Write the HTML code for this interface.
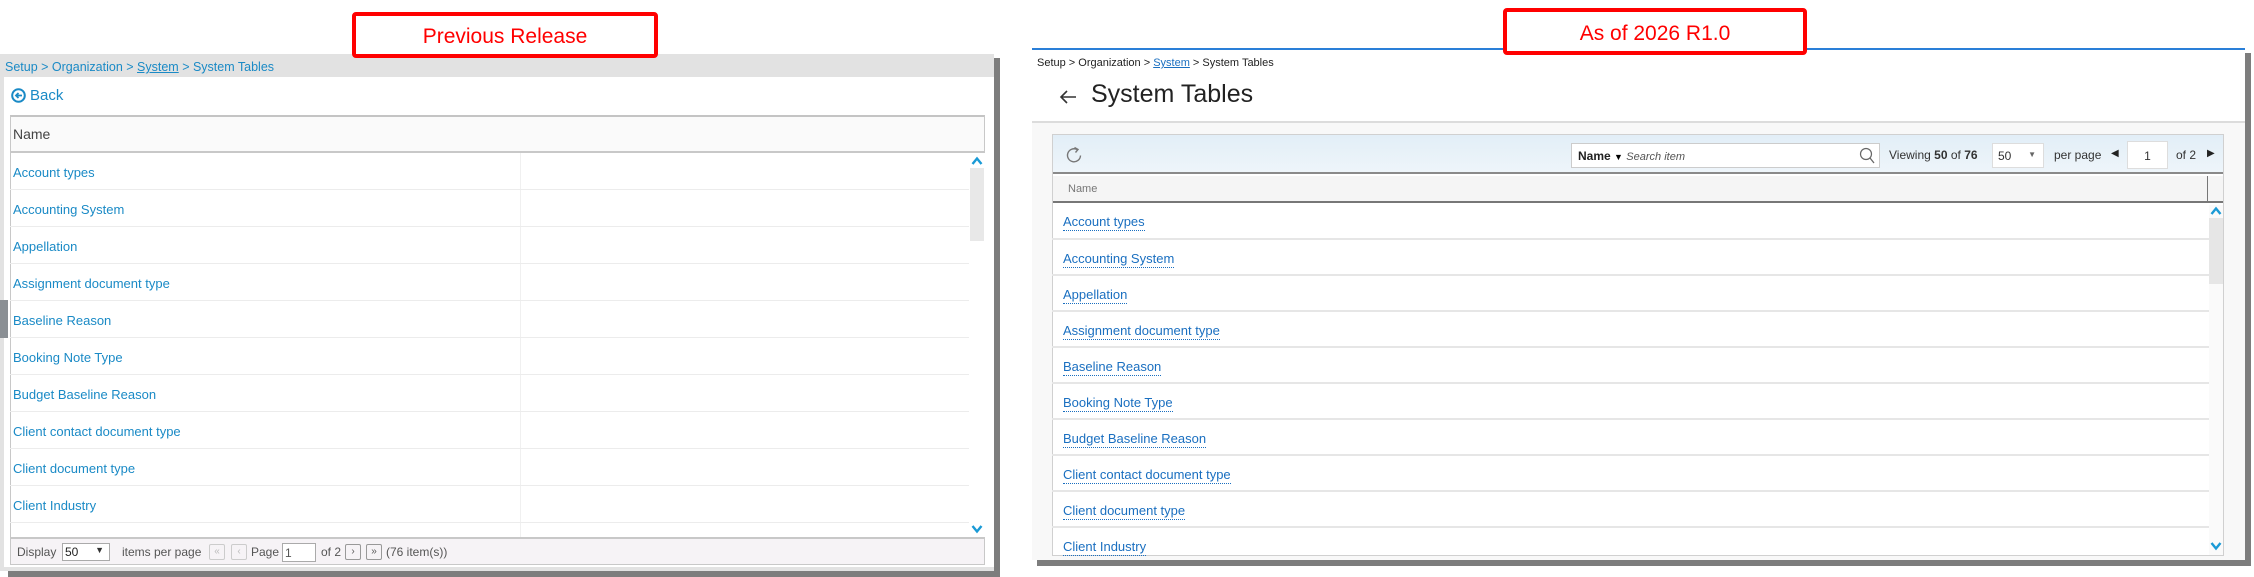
<!DOCTYPE html>
<html><head><meta charset="utf-8">
<style>
*{margin:0;padding:0;box-sizing:border-box}
body{width:2254px;height:577px;background:#fff;position:relative;overflow:hidden;font-family:"Liberation Sans",sans-serif}
.a{position:absolute}
.redbox{border:4px solid #f00;border-radius:4px;background:#fff;color:#f00;font-size:21px;text-align:center}
.lrow{position:absolute;left:10px;width:959px;height:37px;border-bottom:1px solid #ececec;font-size:13px;color:#1a8ac6;padding:12px 0 0 3px}
.lrow:after{content:"";position:absolute;left:510px;top:0;bottom:0;border-left:1px solid #f0f0f0}
.rrow{position:absolute;left:1052px;width:1158px;height:36px;border-bottom:2px solid #e6e6e6;font-size:13px;padding:11px 0 0 11px}
.rrow span{color:#1a6fc0;border-bottom:1px dotted #1a6fc0;padding-bottom:1px}
.btn{position:absolute;top:8px;width:16px;height:16px;border:1px solid #999;border-radius:2px;font-size:10px;text-align:center;line-height:14px;color:#555}
</style></head><body>

<!-- LEFT PANEL -->
<div class="a" style="left:994px;top:58px;width:6px;height:519px;background:#7d7d7d"></div>
<div class="a" style="left:8px;top:571px;width:992px;height:6px;background:#7d7d7d"></div>
<div class="a" style="left:0;top:54px;width:994px;height:517px;background:#e2e2e2"></div>
<div class="a" style="left:4px;top:77px;width:990px;height:490px;background:#fff"></div>
<div class="a" style="left:5px;top:60px;font-size:12.5px;color:#1a8ac6;white-space:nowrap">Setup &gt; Organization &gt; <u>System</u> &gt; System Tables</div>
<svg class="a" style="left:11px;top:88px" width="15" height="15" viewBox="0 0 15 15"><circle cx="7.5" cy="7.5" r="6.3" fill="none" stroke="#1a8ac6" stroke-width="2"/><path d="M11 7.5H5M7.5 5L5 7.5 7.5 10" fill="none" stroke="#1a8ac6" stroke-width="1.8"/></svg>
<div class="a" style="left:30px;top:87px;font-size:15px;color:#1a8ac6">Back</div>
<div class="a" style="left:10px;top:115px;width:975px;height:450px;border:1px solid #c8c8c8;border-top:2px solid #c4c4c4"></div>
<div class="a" style="left:11px;top:117px;width:973px;height:36px;background:#fafafa;border-bottom:2px solid #c8c8c8;font-size:14px;color:#444;padding:9px 0 0 2px">Name</div>
<div class="lrow" style="top:153px">Account types</div>
<div class="lrow" style="top:190px">Accounting System</div>
<div class="lrow" style="top:227px">Appellation</div>
<div class="lrow" style="top:264px">Assignment document type</div>
<div class="lrow" style="top:301px">Baseline Reason</div>
<div class="lrow" style="top:338px">Booking Note Type</div>
<div class="lrow" style="top:375px">Budget Baseline Reason</div>
<div class="lrow" style="top:412px">Client contact document type</div>
<div class="lrow" style="top:449px">Client document type</div>
<div class="lrow" style="top:486px">Client Industry</div>
<div class="lrow" style="top:523px;height:14px;border:none"></div>
<div class="a" style="left:969px;top:153px;width:16px;height:384px;background:#fff"></div>
<div class="a" style="left:970px;top:168px;width:14px;height:73px;background:#e8e8e8"></div>
<svg class="a" style="left:971px;top:156px" width="12" height="9"><path d="M1.5 8L6 2.5 10.5 8" fill="none" stroke="#1a9ad6" stroke-width="2.4"/></svg>
<svg class="a" style="left:971px;top:525px" width="12" height="9"><path d="M1.5 1L6 6.5 10.5 1" fill="none" stroke="#1a9ad6" stroke-width="2.4"/></svg>
<div class="a" style="left:0;top:300px;width:8px;height:38px;background:#8a8f94"></div>
<div class="a" style="left:11px;top:537px;width:973px;height:27px;background:#f6f3f6;border-top:2px solid #c8c8c8;font-size:12px;color:#555">
 <span class="a" style="left:6px;top:6px">Display</span>
 <div class="a" style="left:51px;top:4px;width:48px;height:18px;border:1px solid #aaa;background:#fff;color:#222;padding:1px 2px">50<span class="a" style="right:5px;top:1px;font-size:9px;color:#333">▼</span></div>
 <span class="a" style="left:111px;top:6px">items per page</span>
 <div class="btn" style="left:198px;top:5px;color:#bbb;border-color:#ccc">«</div>
 <div class="btn" style="left:220px;top:5px;color:#bbb;border-color:#ccc">‹</div>
 <span class="a" style="left:240px;top:6px">Page</span>
 <div class="a" style="left:271px;top:4px;width:34px;height:19px;border:1px solid #aaa;background:#fff;padding:2px 2px;color:#555">1</div>
 <span class="a" style="left:310px;top:6px">of 2</span>
 <div class="btn" style="left:334px;top:5px">›</div>
 <div class="btn" style="left:355px;top:5px">»</div>
 <span class="a" style="left:375px;top:6px">(76 item(s))</span>
</div>
<div class="a redbox" style="left:352px;top:12px;width:306px;height:46px;padding-top:9px">Previous Release</div>

<!-- RIGHT PANEL -->
<div class="a" style="left:1032px;top:48px;width:1213px;height:2px;background:#2a7fd8"></div>
<div class="a" style="left:2245px;top:53px;width:6px;height:513px;background:#7d7d7d"></div>
<div class="a" style="left:1037px;top:560px;width:1214px;height:6px;background:#7d7d7d"></div>
<div class="a" style="left:1032px;top:50px;width:1213px;height:71px;background:#fff"></div>
<div class="a" style="left:1032px;top:121px;width:1213px;height:439px;background:#f8f8f8;border-top:2px solid #dcdcdc"></div>
<div class="a" style="left:1037px;top:57px;font-size:11px;color:#222;white-space:nowrap">Setup &gt; Organization &gt; <u style="color:#1a6fc0">System</u> &gt; System Tables</div>
<svg class="a" style="left:1059px;top:89px" width="18" height="16"><path d="M17 8H2M8 2L2 8 8 14" fill="none" stroke="#333" stroke-width="1.6"/></svg>
<div class="a" style="left:1091px;top:80px;font-size:25px;color:#222">System Tables</div>
<div class="a" style="left:1052px;top:134px;width:1172px;height:422px;border:1px solid #d0d0d0;background:#fff"></div>
<div class="a" style="left:1053px;top:135px;width:1170px;height:39px;background:linear-gradient(#e2eef7,#eef5fa);border-bottom:2px solid #8a8a8a"></div>
<svg class="a" style="left:1065px;top:146px" width="18" height="18"><path d="M12 3.5A6.5 6.5 0 1 0 15.5 9.5" fill="none" stroke="#777" stroke-width="1.4"/><path d="M9.5 1.5L13 3.5 10.5 6.5" fill="none" stroke="#777" stroke-width="1.4"/></svg>
<div class="a" style="left:1571px;top:143px;width:309px;height:25px;background:#fff;border:1px solid #ccc;font-size:12px;padding:5px 0 0 6px"><b style="color:#222">Name</b> <span style="font-size:9px">▼</span> <i style="color:#555;font-size:11px">Search item</i>
 <svg class="a" style="right:4px;top:3px" width="16" height="18"><circle cx="7" cy="7" r="5.5" fill="none" stroke="#666" stroke-width="1.2"/><path d="M11 11L15 16" stroke="#666" stroke-width="1.3"/></svg></div>
<div class="a" style="left:1889px;top:148px;font-size:12px;color:#333;white-space:nowrap">Viewing <b>50</b> of <b>76</b></div>
<div class="a" style="left:1992px;top:143px;width:52px;height:25px;background:#fff;border:1px solid #ddd;font-size:12px;padding:5px 0 0 5px;color:#333">50<span class="a" style="right:7px;top:6px;font-size:8px;color:#666">▼</span></div>
<div class="a" style="left:2054px;top:148px;font-size:12px;color:#333">per page</div>
<div class="a" style="left:2111px;top:148px;font-size:10px;color:#222">◀</div>
<div class="a" style="left:2127px;top:141px;width:41px;height:28px;background:#fff;border:1px solid #ddd;font-size:12px;text-align:center;padding-top:7px;color:#333">1</div>
<div class="a" style="left:2176px;top:148px;font-size:12px;color:#333">of 2</div>
<div class="a" style="left:2207px;top:148px;font-size:10px;color:#222">▶</div>
<div class="a" style="left:1053px;top:176px;width:1170px;height:27px;background:#f5f5f5;border-bottom:2px solid #777;font-size:11px;color:#777;padding:7px 0 0 15px">Name</div>
<div class="a" style="left:2207px;top:176px;width:1px;height:27px;background:#777"></div>
<div class="rrow" style="top:203px;height:37px"><span>Account types</span></div>
<div class="rrow" style="top:240px"><span>Accounting System</span></div>
<div class="rrow" style="top:276px"><span>Appellation</span></div>
<div class="rrow" style="top:312px"><span>Assignment document type</span></div>
<div class="rrow" style="top:348px"><span>Baseline Reason</span></div>
<div class="rrow" style="top:384px"><span>Booking Note Type</span></div>
<div class="rrow" style="top:420px"><span>Budget Baseline Reason</span></div>
<div class="rrow" style="top:456px"><span>Client contact document type</span></div>
<div class="rrow" style="top:492px"><span>Client document type</span></div>
<div class="rrow" style="top:528px;height:27px;border:none"><span>Client Industry</span></div>
<div class="a" style="left:2209px;top:205px;width:14px;height:350px;background:#fafafa"></div>
<div class="a" style="left:2209px;top:218px;width:14px;height:66px;background:#e6e6e6"></div>
<svg class="a" style="left:2210px;top:206px" width="12" height="9"><path d="M1.5 8L6 2.5 10.5 8" fill="none" stroke="#1a9ad6" stroke-width="2.4"/></svg>
<svg class="a" style="left:2210px;top:542px" width="12" height="9"><path d="M1.5 1L6 6.5 10.5 1" fill="none" stroke="#1a9ad6" stroke-width="2.4"/></svg>
<div class="a redbox" style="left:1503px;top:8px;width:304px;height:47px;padding-top:10px">As of 2026 R1.0</div>
</body></html>
